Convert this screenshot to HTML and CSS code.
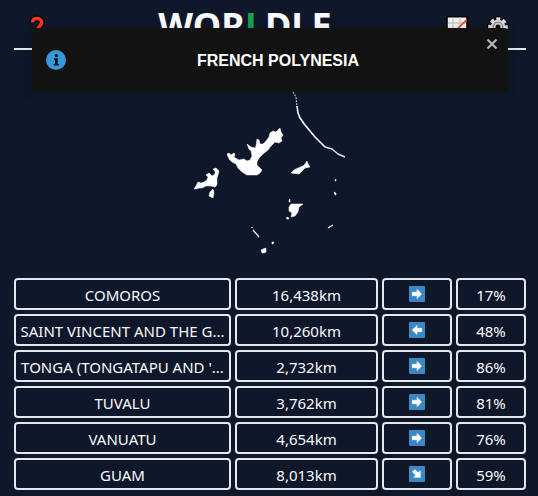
FILE: index.html
```html
<!DOCTYPE html>
<html lang="en">
<head>
<meta charset="utf-8">
<meta name="viewport" content="width=device-width, initial-scale=1">
<title>Worldle</title>
<link rel="stylesheet" href="styles.css">
</head>
<body>
<svg class="defs" aria-hidden="true">
  <symbol id="arrow" viewBox="0 0 16 16">
    <path fill="#fff" stroke="#fff" stroke-width=".6" stroke-linejoin="round" d="M3.300 6.300H8V3.500l4.700 4.500L8 12.500V9.700H3.300z"/>
  </symbol>
</svg>
<div class="toast" role="alert">
  <svg class="toast-icon" viewBox="0 0 20 20" aria-hidden="true">
    <circle cx="10" cy="10" r="10" fill="#3498db"/>
    <circle cx="10.300" cy="5.700" r="1.600" fill="#121212"/>
    <path fill="#121212" d="M8 8.300h3.700v5.700H13v1.600H7.600V14H9V9.800H8z"/>
  </svg>
  <p class="toast-text">FRENCH POLYNESIA</p>
  <button class="close" type="button" aria-label="Close">
    <svg viewBox="0 0 12 12" aria-hidden="true"><path d="M1.500 1.500l9 9M10.500 1.500l-9 9" stroke="#b8b8b8" stroke-width="2.200"/></svg>
  </button>
</div>
<div class="app">
  <header class="header">
    <button class="icon-button" type="button" aria-label="How to play">
      <svg viewBox="0 0 24 24" aria-hidden="true">
        <path d="M7.500 11C7.500 7.500 9.500 6.500 12 6.500s4.700 1.500 4.700 4c0 3.500-4.200 4-4.200 7M12.500 20v2" fill="none" stroke="#000" stroke-width="6"/>
        <path d="M7.500 10.500C7.500 7.500 9.500 6.500 12 6.500s4.700 1.500 4.700 4c0 3.500-4.200 4-4.200 7M12.500 20v2" fill="none" stroke="#f03a17" stroke-width="3.600"/>
      </svg>
    </button>
    <h1 class="title">WOR<span class="green">L</span>DLE</h1>
    <div class="actions">
      <button class="icon-button" type="button" aria-label="Statistics">
        <svg viewBox="0 0 24 24" aria-hidden="true">
          <path fill="#f1f1f1" stroke="#000" stroke-width="1.500" d="M2 4.700h20V23H2z"/>
          <path d="M8 5.500V22M15 5.500V22M3 11h18M3 17h18" stroke="#c9c9c9" stroke-width="1.300"/>
          <path d="M8 21l13.500-13" fill="none" stroke="#f03a17" stroke-width="1.700"/>
        </svg>
      </button>
      <button class="icon-button" type="button" aria-label="Settings">
        <svg viewBox="0 0 24 24" aria-hidden="true">
          <g transform="translate(0 3)">
            <circle cx="12" cy="12" r="8.200" fill="none" stroke="#000" stroke-width="5.400" stroke-dasharray="4.740 1.700" stroke-dashoffset="2.370"/>
            <circle cx="12" cy="12" r="7.700" fill="#d0d0d0" stroke="#000"/>
            <circle cx="12" cy="12" r="8" fill="none" stroke="#dcdcdc" stroke-width="3.600" stroke-dasharray="3.800 2.483" stroke-dashoffset="1.900"/>
            <circle cx="12" cy="12" r="7" fill="#dcdcdc"/>
            <circle cx="12" cy="12" r="4.800" fill="#d0d0d0" stroke="#888" stroke-width="1.300"/>
            <circle cx="12" cy="12" r="2.500" fill="#000"/>
          </g>
        </svg>
      </button>
    </div>
  </header>
  <main>
    <svg class="map" viewBox="0 0 512 220" role="img" aria-label="Country outline">
      <g transform="translate(-14 -54)" fill="#fff" stroke="#fff" stroke-width=".5" stroke-linejoin="round">
        <path d="M227 154l2-1 2 2 3-2 1 1-1 3 3 2 2 1 5-1 3 2 3-1 2-4-1-5-2-2-2-5 4 3 4 1 1-2 1-7 2 1 1 4 3 0 3-3 3-4 1-4 3-2 3 1 2-2 2-2 1 4 2 3-2 3 1 3-3 2-4-1-4 4-3 4-5 4-4 4-2 4 0 3 5 5-2 3-3 2-10 0-5-3-4-4-2-4-4-2-3-3z"/>
        <path d="M194 189l2-3 2-4 3 1 3-1 3-2 1-3-2-2 3-2 3 3 3-2 0-3-2-2 3-1 3 3-1 4-1 3 0 7-2 2-4-1-5 0-4 2-3 0-3 1zM210 192l3-3 1 4-1 5-4-2z"/>
        <path d="M291 173l3-3 4-2 5-2 2-2 2-3 1 3 2 3-5 1-3 3-3 3z"/>
        <path d="M289 207l2-3 5 0 7 0-4 3-1 5-3 4-4 1 1-4-3-2zM289 200l1-1v3h-1zM286 218l2-1 1 2h-2z"/>
        <path d="M261 250l2-1 3-1 0 4-2 1-2 0zM272 242l2 0-1 2h-1zM334 192l2 1v2h-1zM335 180l1-1v2h-1z"/>
        <path fill="none" stroke-width="1.200" d="M253 230l6 7M252 228v-1M328 228l5-3"/>
        <path fill="none" stroke="#b6bac2" stroke-width="1.200" stroke-dasharray="2 1" d="M293 92l3 5 1 10"/>
        <path fill="none" stroke-width="1.600" d="M297 106l1 7 2 5 5 7 10 12 10 10"/>
        <path fill="none" stroke="#e2e4e8" stroke-width="1.400" d="M325 147l7 2 6 5 7 3"/>
      </g>
    </svg>
    <div class="guesses">
      <div class="cell">COMOROS</div><div class="cell">16,438km</div><div class="cell"><svg class="arrow" viewBox="0 0 16 16" role="img" aria-label="East"><use href="#arrow"/></svg></div><div class="cell">17%</div>
      <div class="cell">SAINT VINCENT AND THE G...</div><div class="cell">10,260km</div><div class="cell"><svg class="arrow" viewBox="0 0 16 16" role="img" aria-label="West"><use href="#arrow" transform="rotate(180 8 8)"/></svg></div><div class="cell">48%</div>
      <div class="cell">TONGA (TONGATAPU AND '...</div><div class="cell">2,732km</div><div class="cell"><svg class="arrow" viewBox="0 0 16 16" role="img" aria-label="East"><use href="#arrow"/></svg></div><div class="cell">86%</div>
      <div class="cell">TUVALU</div><div class="cell">3,762km</div><div class="cell"><svg class="arrow" viewBox="0 0 16 16" role="img" aria-label="East"><use href="#arrow"/></svg></div><div class="cell">81%</div>
      <div class="cell">VANUATU</div><div class="cell">4,654km</div><div class="cell"><svg class="arrow" viewBox="0 0 16 16" role="img" aria-label="East"><use href="#arrow"/></svg></div><div class="cell">76%</div>
      <div class="cell">GUAM</div><div class="cell">8,013km</div><div class="cell"><svg class="arrow" viewBox="0 0 16 16" role="img" aria-label="South-east"><use href="#arrow" transform="rotate(45 8 8)"/></svg></div><div class="cell">59%</div>
    </div>
  </main>
</div>
</body>
</html>
```

FILE: styles.css
```css
* { box-sizing: border-box; }
body {
  margin: 0;
  background: #0f172a;
  color: #f8fafc;
  font: 15px/24px "Noto Sans", sans-serif;
}
button { padding: 0; border: 0; background: none; color: inherit; cursor: pointer; }
svg { display: block; }
.defs { position: absolute; width: 0; height: 0; }
.app { max-width: 540px; margin: 0 auto; padding: 0 12px 6px 14px; }
.header {
  display: flex;
  align-items: center;
  height: 50px;
  padding: 0 16px 0 11px;
  border-bottom: 2px solid #e5e7eb;
}
.title {
  flex: 1;
  margin: 0;
  padding: 4px 4px 0 0;
  text-align: center;
  font: bold 36px/40px "Noto Sans", sans-serif;
}
.green { color: #16a34a; }
.icon-button { width: 24px; }
.actions { display: flex; gap: 17px; }
.map { width: 100%; margin: 4px 0; }
.guesses {
  display: grid;
  grid-template-columns: 217fr 143fr 70fr 70fr;
  gap: 4px;
}
.cell {
  display: flex;
  align-items: center;
  justify-content: center;
  min-width: 0;
  height: 32px;
  padding-top: 1px;
  border: 2px solid #e5e7eb;
  border-radius: 4px;
  white-space: nowrap;
  overflow: hidden;
}
.arrow { width: 16px; height: 16px; margin-bottom: 2px; border-radius: 1px; background: #3b88c3; }
.toast {
  position: absolute;
  z-index: 1;
  top: 28px;
  left: 32px;
  right: 30px;
  display: flex;
  align-items: center;
  min-height: 64px;
  padding: 8px 14px;
  border-radius: 4px;
  background: #121212;
  box-shadow: 0 1px 10px rgba(0, 0, 0, 0.1), 0 2px 15px rgba(0, 0, 0, 0.05);
  color: #fff;
  font: bold 16px/24px "Liberation Sans", sans-serif;
}
.toast-icon { width: 20px; height: 20px; }
.toast-text { flex: 1; margin: 0; padding: 2px 0 0 4px; text-align: center; }
.close { align-self: flex-start; width: 12px; margin: 2px -4px 0 0; }
```
